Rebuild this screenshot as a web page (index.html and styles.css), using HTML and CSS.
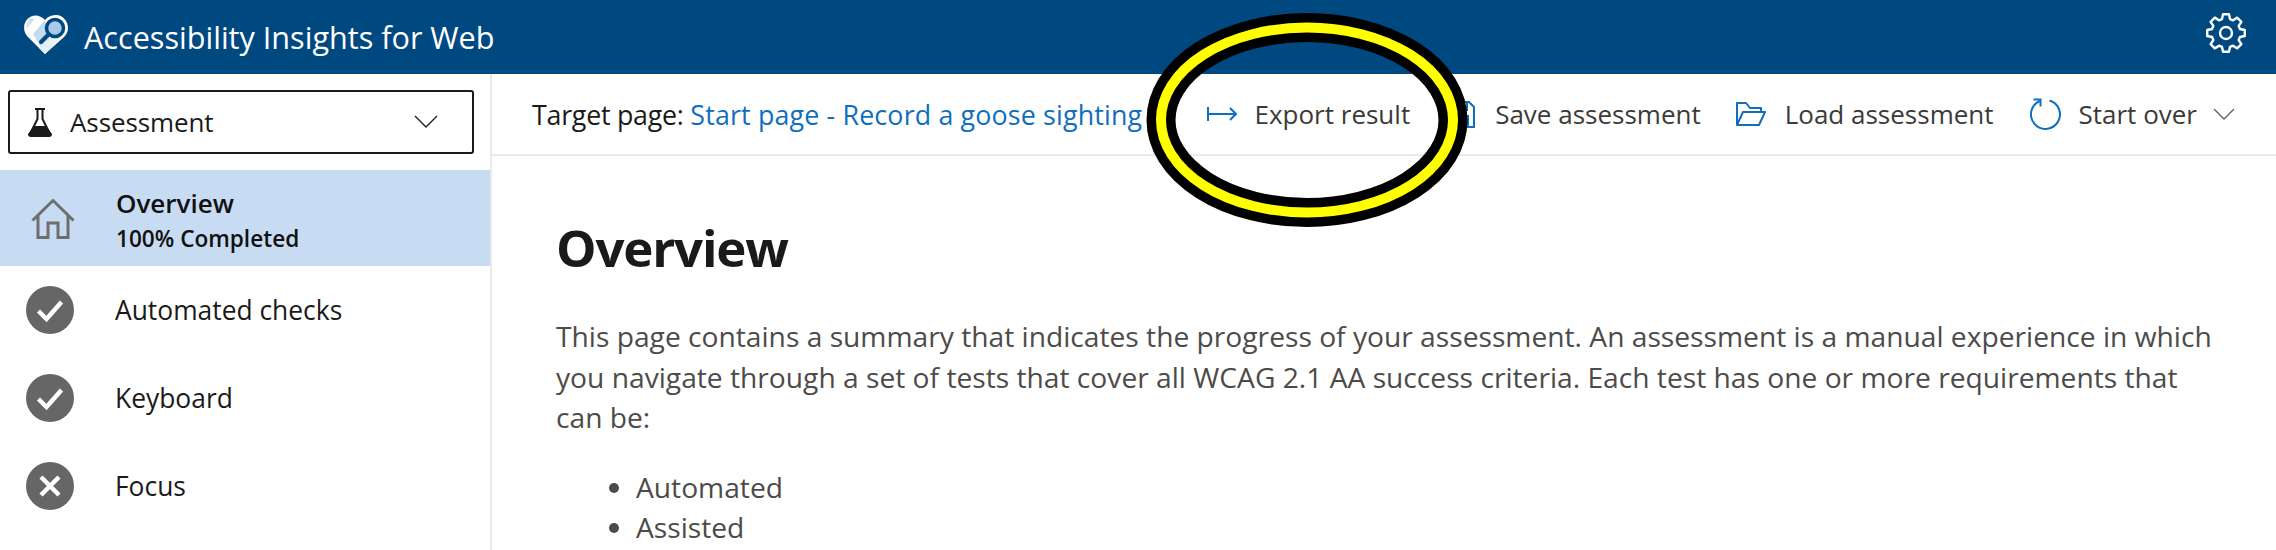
FILE: index.html
```html
<!DOCTYPE html>
<html lang="en">
<head>
<meta charset="utf-8">
<title>Accessibility Insights for Web</title>
<link rel="stylesheet" href="styles.css">
</head>
<body>
<header class="topbar">
  <svg class="logo" viewBox="0 0 44 39"><path d="M21 39 3 21C-2 15-.5 5 7 1.500 12-.5 17 1 21 5c3-4 8-5 12-5 7 1 11 7 11 13 0 4-2 7-4 9z" fill="#fff"/><path d="M21 5 9 19l12 20 6-12-3-8z" fill="#c5dcef"/><path d="M7 3c-3 2-5 6-4 10l8-9z" fill="#cfe0ef"/><path d="M15 33 33 16v10L21 39z" fill="#e6f0f8"/><circle cx="31" cy="13" r="8.500" fill="#a9cbe9" stroke="#004880" stroke-width="3.500"/><path d="M24.500 19.500 17 27" stroke="#004880" stroke-width="4" stroke-linecap="round"/></svg>
  <span class="brand">Accessibility Insights for Web</span>
  <svg class="gear" viewBox="0 0 40 40" fill="none" stroke="#fff" stroke-width="2.400" stroke-linejoin="round"><path d="M16 6.060 17.030 1.230H22.970L24 6.060 27.030 7.320 31.170 4.630 35.370 8.830 32.680 12.970 33.940 16 38.770 17.030V22.970L33.940 24 32.680 27.030 35.370 31.170 31.170 35.370 27.030 32.680 24 33.940 22.970 38.770H17.030L16 33.940 12.970 32.680 8.830 35.370 4.630 31.170 7.320 27.030 6.060 24 1.230 22.970V17.030L6.060 16 7.320 12.970 4.630 8.830 8.830 4.630 12.970 7.320z"/><circle cx="20" cy="20" r="6"/></svg>
</header>
<div class="layout">
  <nav class="sidebar">
    <div class="select">
      <svg class="flask" viewBox="0 0 24 29"><path d="M7 1h10M9.500 1v10L2 26h20L14.500 11V1" fill="none" stroke="#1b1a19" stroke-width="2"/><path d="M6 18h12l6 8q0 3-3 3H3q-3 0-3-3z" fill="#1b1a19"/></svg>
      <span class="select-label">Assessment</span>
      <svg class="select-chev" viewBox="0 0 24 14" fill="none" stroke="#1b1a19" stroke-width="1.300"><path d="M1 1l11 11L23 1"/></svg>
    </div>
    <div class="nav-item nav-active">
      <svg class="home" viewBox="0 0 44 41" fill="none" stroke="#6e6e6e" stroke-width="3"><path d="M1.500 22.500 22 2.500l20.500 20M7 18v21.500h10V25h10v14.500h10V18"/></svg>
      <div class="nav-active-text"><div class="nav-title">Overview</div><div class="nav-sub">100% Completed</div></div>
    </div>
    <div class="nav-list">
      <div class="nav-item">
        <svg class="status" viewBox="0 0 48 48"><circle cx="24" cy="24" r="24" fill="#666"/><path d="M12.500 25l8 8 15-17" fill="none" stroke="#fff" stroke-width="4.500"/></svg>
        <span class="nav-text">Automated checks</span>
      </div>
      <div class="nav-item">
        <svg class="status" viewBox="0 0 48 48"><circle cx="24" cy="24" r="24" fill="#666"/><path d="M12.500 25l8 8 15-17" fill="none" stroke="#fff" stroke-width="4.500"/></svg>
        <span class="nav-text">Keyboard</span>
      </div>
      <div class="nav-item">
        <svg class="status" viewBox="0 0 48 48"><circle cx="24" cy="24" r="24" fill="#666"/><path d="M15 15l18 18M33 15 15 33" fill="none" stroke="#fff" stroke-width="4.500"/></svg>
        <span class="nav-text">Focus</span>
      </div>
    </div>
  </nav>
  <main class="main">
    <div class="commandbar">
      <div class="target">Target page: <a class="target-link">Start page - Record a goose sighting</a></div>
      <div class="actions">
        <div class="action action-export">
          <svg class="export-icon" viewBox="0 0 31 14" fill="none" stroke="#106ebe" stroke-width="2"><path d="M1 0v14M1 7h28M23 1l6 6-6 6"/></svg>
          <span>Export result</span>
        </div>
        <div class="action action-save">
          <svg class="save-icon" viewBox="0 0 26 27" fill="none" stroke="#106ebe" stroke-width="2"><path d="M1 1h19l5 5v20H1zM7 1v8h11V1M7 26V15h12v11"/></svg>
          <span>Save assessment</span>
        </div>
        <div class="action action-load">
          <svg class="load-icon" viewBox="0 0 30 24" fill="none" stroke="#106ebe" stroke-width="2" stroke-linejoin="round"><path d="M1 23V1h9l4 5h11v4M1 23l6-13h22l-6 13z"/></svg>
          <span>Load assessment</span>
        </div>
        <div class="action action-over">
          <svg class="over-icon" viewBox="0 0 32 32" fill="none" stroke="#106ebe" stroke-width="2"><path d="M19.500 2.500A14.500 14.500 0 1 1 10 3"/><path d="M3.500 1.500h7v7"/></svg>
          <span>Start over</span>
          <svg class="over-chev" viewBox="0 0 22 12" fill="none" stroke="#605e5c" stroke-width="1.300"><path d="M1 1l10 10L21 1"/></svg>
        </div>
      </div>
    </div>
    <article class="content">
      <h1 class="title">Overview</h1>
      <p class="intro">This page contains a summary that indicates the progress of your assessment. An assessment is a manual experience in which you navigate through a set of tests that cover all WCAG 2.1 AA success criteria. Each test has one or more requirements that can be:</p>
      <ul class="kinds">
        <li>Automated</li>
        <li>Assisted</li>
      </ul>
    </article>
  </main>
</div>
<svg class="callout" viewBox="0 0 322 214"><ellipse cx="161" cy="107" rx="146" ry="92.500" fill="none" stroke="#000" stroke-width="29"/><ellipse cx="161" cy="107" rx="146" ry="92.500" fill="none" stroke="#ff0" stroke-width="10"/></svg>
</body>
</html>
```
FILE: styles.css
```css
* { box-sizing: border-box; }
html, body { margin: 0; height: 550px; overflow: hidden; }
body { position: relative; background: #fff; font-family: "Open Sans", "Noto Sans", sans-serif; color: #1b1a19; }
.topbar { height: 74px; background: #004880; display: flex; align-items: center; padding: 0 30px 0 24px; color: #fff; }
.logo { width: 44px; height: 39px; margin-top: -5px; }
.brand { margin-left: 16px; font-size: 30.6px; }
.gear { width: 40px; height: 40px; margin-left: auto; margin-top: -8px; }
.layout { display: flex; height: 476px; }
.sidebar { width: 492px; flex: none; border-right: 2px solid #eaeaea; padding-top: 16px; }
.select { width: 466px; height: 64px; margin-left: 8px; border: 2px solid #1b1a19; border-radius: 3px; display: flex; align-items: center; padding: 0 34px 0 18px; }
.flask { width: 24px; height: 29px; }
.select-label { margin-left: 18px; font-size: 26px; letter-spacing: -.1px; }
.select-chev { width: 24px; height: 14px; margin-left: auto; }
.nav-item { display: flex; align-items: center; }
.nav-active { margin-top: 16px; height: 96px; background: #c7dcf2; padding-left: 31px; }
.home { width: 44px; height: 41px; }
.nav-active-text { margin-left: 41px; padding-top: 7px; }
.nav-title { font-size: 26px; font-weight: 600; line-height: 34px; color: #111; }
.nav-sub { font-size: 22.6px; font-weight: 600; line-height: 38px; color: #111; }
.nav-list { display: flex; flex-direction: column; gap: 40px; padding: 20px 0 0 26px; }
.status { width: 48px; height: 48px; flex: none; }
.nav-text { margin-left: 41px; font-size: 26.4px; }
.main { flex: 1; min-width: 0; }
.commandbar { height: 82px; border-bottom: 2px solid #eaeaea; display: flex; align-items: center; padding: 0 41px 0 40px; }
.target { font-size: 26.8px; letter-spacing: -.25px; white-space: nowrap; }
.target-link { color: #106ebe; letter-spacing: .16px; }
.actions { display: flex; margin-left: auto; color: #3b3a39; font-size: 26px; }
.action { display: flex; align-items: center; white-space: nowrap; }
.action-save { margin-left: 39px; }
.action-load { margin-left: 35px; }
.action-over { margin-left: 36px; }
.export-icon { width: 31px; height: 14px; margin-right: 17px; }
.save-icon { width: 26px; height: 27px; margin-right: 20px; }
.load-icon { width: 30px; height: 24px; margin-right: 19px; }
.over-icon { width: 32px; height: 32px; margin-right: 17px; }
.over-chev { width: 22px; height: 12px; margin-left: 16px; }
.content { padding: 59px 55px 0 64px; }
.title { margin: 0; font-size: 51px; line-height: 64px; font-weight: 700; color: #1b1a19; letter-spacing: -1.2px; }
.intro { margin: 37px 0 0; font-size: 28.2px; line-height: 40.6px; color: #4d4b49; }
.kinds { margin: 29px 0 0; padding-left: 80px; font-size: 28.2px; line-height: 40.6px; color: #4d4b49; }
.callout { position: absolute; left: 1146px; top: 13px; width: 322px; height: 214px; }
```
